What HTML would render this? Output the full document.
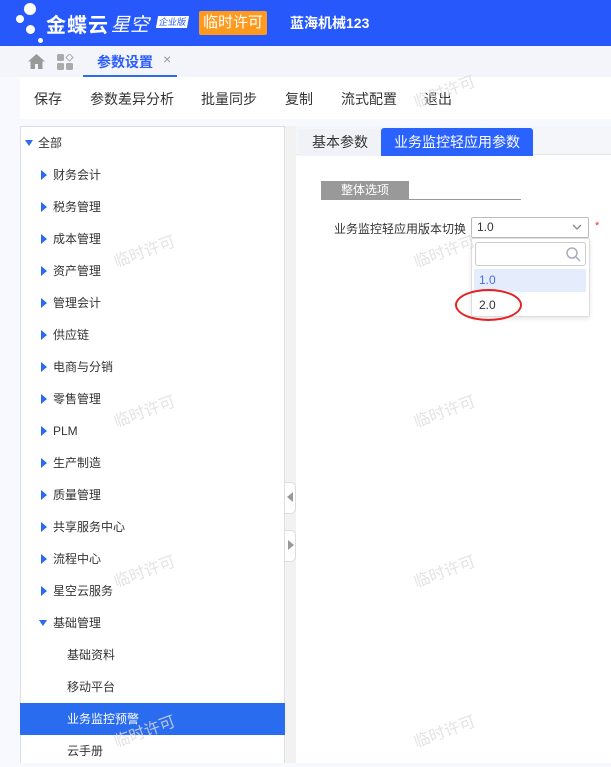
<!DOCTYPE html>
<html><head><meta charset="utf-8"><style>
*{margin:0;padding:0;box-sizing:border-box}
body{width:611px;height:763px;overflow:hidden;background:#f7f9fe;font-family:"Liberation Sans","Noto Sans CJK SC",sans-serif;position:relative;color:#333}
.abs{position:absolute}
.hdr{left:0;top:0;width:611px;height:46px;background:#2658fc}
.dot{position:absolute;background:#fff;border-radius:50%}
.tabbar{left:0;top:46px;width:611px;height:31px;background:#f3f5fa}
.tool{left:20px;top:77px;width:591px;height:42px;background:#fff;font-size:14px}
.tool span{position:absolute;top:12px}
.left{left:20px;top:126px;width:265px;height:637px;background:#fff;border:1px solid #dcdfe6;border-bottom:none}
.row{position:absolute;left:0;width:264px;height:32px;font-size:12px;line-height:32px;color:#333}
.tri{position:absolute;width:0;height:0;border-top:5px solid transparent;border-bottom:5px solid transparent;border-left:6px solid #2a6cf0;top:11px;left:20px}
.trid{position:absolute;width:0;height:0;border-left:4px solid transparent;border-right:4px solid transparent;border-top:6px solid #2a6cf0;top:13px}
.split{left:285px;top:126px;width:11px;height:637px;background:#f2f2f2}
.right{left:296px;top:126px;width:315px;height:637px;background:#fff}
.wm{position:absolute;color:#ddd;font-size:16px;transform:rotate(-20deg);white-space:nowrap;opacity:.8}
</style></head><body>
<div class="abs hdr">
 <div class="dot" style="left:24px;top:3px;width:12px;height:12px"></div>
 <div class="dot" style="left:16px;top:15px;width:8px;height:8px"></div>
 <div class="dot" style="left:26px;top:25px;width:9px;height:9px"></div>
 <div class="dot" style="left:38px;top:38px;width:5px;height:5px"></div>
 <div class="abs" style="left:46px;top:9px;color:#fff;font-size:20px;font-weight:bold;letter-spacing:1px">金蝶云</div>
 <div class="abs" style="left:111px;top:10px;color:#fff;font-size:19px;font-style:italic">星空</div>
 <div class="abs" style="left:157px;top:16px;background:#fff;color:#2658fc;font-size:9px;padding:0 2px;line-height:12px;transform:skewX(-10deg)">企业版</div>
 <div class="abs" style="left:199px;top:11px;width:68px;height:24px;background:#ff9a1f;color:#fff;font-size:15px;line-height:24px;text-align:center;border-radius:2px">临时许可</div>
 <div class="abs" style="left:290px;top:13px;color:#fff;font-size:14px;font-weight:bold">蓝海机械123</div>
</div>
<div class="abs tabbar">
 <svg class="abs" style="left:28px;top:8px" width="17" height="15" viewBox="0 0 17 15"><path d="M8.5 0L0 7.5h2.5V15h4.5v-5h3v5h4.5V7.5H17z" fill="#999"/></svg>
 <svg class="abs" style="left:57px;top:8px" width="17" height="17" viewBox="0 0 17 17"><rect x="0" y="0" width="7" height="7" rx="1.5" fill="#aaa"/><rect x="9" y="9" width="7" height="7" rx="1.5" fill="#aaa"/><rect x="0" y="9" width="7" height="7" rx="1.5" fill="#aaa"/><rect x="10" y="1" width="5" height="5" transform="rotate(45 12.5 3.5)" fill="none" stroke="#aaa"/></svg>
 <div class="abs" style="left:97px;top:6px;color:#2a5cff;font-size:14px;font-weight:bold">参数设置</div>
 <div class="abs" style="left:163px;top:5px;color:#999;font-size:14px">×</div>
 <div class="abs" style="left:83px;top:29px;width:94px;height:2px;background:#2a6cf0"></div>
</div>
<div class="abs tool">
 <span style="left:14px">保存</span><span style="left:70px">参数差异分析</span><span style="left:181px">批量同步</span><span style="left:265px">复制</span><span style="left:321px">流式配置</span><span style="left:404px">退出</span>
</div>
<div class="abs left">
 <div class="row" style="top:0"><div class="trid" style="left:4px"></div><span style="position:absolute;left:17px">全部</span></div>
 <div class="row" style="top:32px"><div class="tri"></div><span style="position:absolute;left:32px">财务会计</span></div>
 <div class="row" style="top:64px"><div class="tri"></div><span style="position:absolute;left:32px">税务管理</span></div>
 <div class="row" style="top:96px"><div class="tri"></div><span style="position:absolute;left:32px">成本管理</span></div>
 <div class="row" style="top:128px"><div class="tri"></div><span style="position:absolute;left:32px">资产管理</span></div>
 <div class="row" style="top:160px"><div class="tri"></div><span style="position:absolute;left:32px">管理会计</span></div>
 <div class="row" style="top:192px"><div class="tri"></div><span style="position:absolute;left:32px">供应链</span></div>
 <div class="row" style="top:224px"><div class="tri"></div><span style="position:absolute;left:32px">电商与分销</span></div>
 <div class="row" style="top:256px"><div class="tri"></div><span style="position:absolute;left:32px">零售管理</span></div>
 <div class="row" style="top:288px"><div class="tri"></div><span style="position:absolute;left:32px">PLM</span></div>
 <div class="row" style="top:320px"><div class="tri"></div><span style="position:absolute;left:32px">生产制造</span></div>
 <div class="row" style="top:352px"><div class="tri"></div><span style="position:absolute;left:32px">质量管理</span></div>
 <div class="row" style="top:384px"><div class="tri"></div><span style="position:absolute;left:32px">共享服务中心</span></div>
 <div class="row" style="top:416px"><div class="tri"></div><span style="position:absolute;left:32px">流程中心</span></div>
 <div class="row" style="top:448px"><div class="tri"></div><span style="position:absolute;left:32px">星空云服务</span></div>
 <div class="row" style="top:480px"><div class="trid" style="left:18px"></div><span style="position:absolute;left:32px">基础管理</span></div>
 <div class="row" style="top:512px"><span style="position:absolute;left:46px">基础资料</span></div>
 <div class="row" style="top:544px"><span style="position:absolute;left:46px">移动平台</span></div>
 <div class="row" style="top:576px;background:#2a6cf0;color:#fff;left:-1px;width:265px"><span style="position:absolute;left:47px">业务监控预警</span></div>
 <div class="row" style="top:608px"><span style="position:absolute;left:46px">云手册</span></div>
</div>
<div class="abs split">
 <div class="abs" style="left:0;top:356px;width:11px;height:32px;background:#fff;border:1px solid #ddd;border-left:none;border-radius:0 5px 5px 0"></div>
 <div class="abs" style="left:2px;top:366px;border-top:5px solid transparent;border-bottom:5px solid transparent;border-right:6px solid #999"></div>
 <div class="abs" style="left:0;top:404px;width:11px;height:32px;background:#fff;border:1px solid #ddd;border-left:none;border-radius:0 5px 5px 0"></div>
 <div class="abs" style="left:3px;top:414px;border-top:5px solid transparent;border-bottom:5px solid transparent;border-left:6px solid #999"></div>
</div>
<div class="abs right">
 <div class="abs" style="left:0;top:0;width:315px;height:29px;background:#f5f6f9;border-bottom:1px solid #e2e5ea"></div>
 <div class="abs" style="left:3px;top:3px;width:82px;height:27px;background:#f0f2f7;font-size:14px;line-height:27px;text-align:center;color:#333">基本参数</div>
 <div class="abs" style="left:85px;top:2px;width:152px;height:28px;background:#2a62ff;color:#fff;font-size:14px;line-height:28px;text-align:center;border-radius:3px 3px 0 0">业务监控轻应用参数</div>
 <div class="abs" style="left:25px;top:55px;width:88px;height:19px;background:#999;color:#fff;font-size:12px;line-height:19px;text-align:center">整体选项</div>
 <div class="abs" style="left:25px;top:73px;width:200px;height:1px;background:#999"></div>
 <div class="abs" style="left:38px;top:94px;font-size:12px;color:#333">业务监控轻应用版本切换</div>
 <div class="abs" style="left:175px;top:91px;width:118px;height:21px;border:1px solid #bbb;border-radius:2px;font-size:12px;line-height:19px;padding-left:5px">1.0<svg style="position:absolute;right:6px;top:6px" width="10" height="7" viewBox="0 0 10 7"><path d="M1 1l4 4 4-4" fill="none" stroke="#888" stroke-width="1.3"/></svg></div>
 <div class="abs" style="left:299px;top:94px;color:#e33;font-size:11px">*</div>
 <div class="abs" style="left:175px;top:112px;width:119px;height:79px;background:#fff;border:1px solid #ddd;border-radius:2px;box-shadow:0 2px 4px rgba(0,0,0,.1)">
  <div class="abs" style="left:3px;top:3px;width:111px;height:24px;border:1px solid #ccc;border-radius:3px"></div>
  <svg class="abs" style="left:94px;top:8px" width="15" height="15" viewBox="0 0 15 15"><circle cx="6" cy="6" r="5" fill="none" stroke="#aab" stroke-width="1.5"/><path d="M9.5 9.5l4.5 4.5" stroke="#aab" stroke-width="1.5"/></svg>
  <div class="abs" style="left:2px;top:30px;width:112px;height:23px;background:#e5ecfc;color:#4a6ee8;font-size:12px;line-height:23px;padding-left:5px">1.0</div>
  <div class="abs" style="left:7px;top:55px;font-size:12px;line-height:23px;color:#333">2.0</div>
 </div>
 <div class="abs" style="left:159px;top:163px;width:67px;height:32px;border:2px solid #e52222;border-radius:50%"></div>
</div>
<div class="wm" style="left:412px;top:78px">临时许可</div>
<div class="wm" style="left:112px;top:238px">临时许可</div>
<div class="wm" style="left:412px;top:238px">临时许可</div>
<div class="wm" style="left:112px;top:398px">临时许可</div>
<div class="wm" style="left:412px;top:398px">临时许可</div>
<div class="wm" style="left:112px;top:558px">临时许可</div>
<div class="wm" style="left:412px;top:558px">临时许可</div>
<div class="wm" style="left:112px;top:718px">临时许可</div>
<div class="wm" style="left:412px;top:718px">临时许可</div>
</body></html>
